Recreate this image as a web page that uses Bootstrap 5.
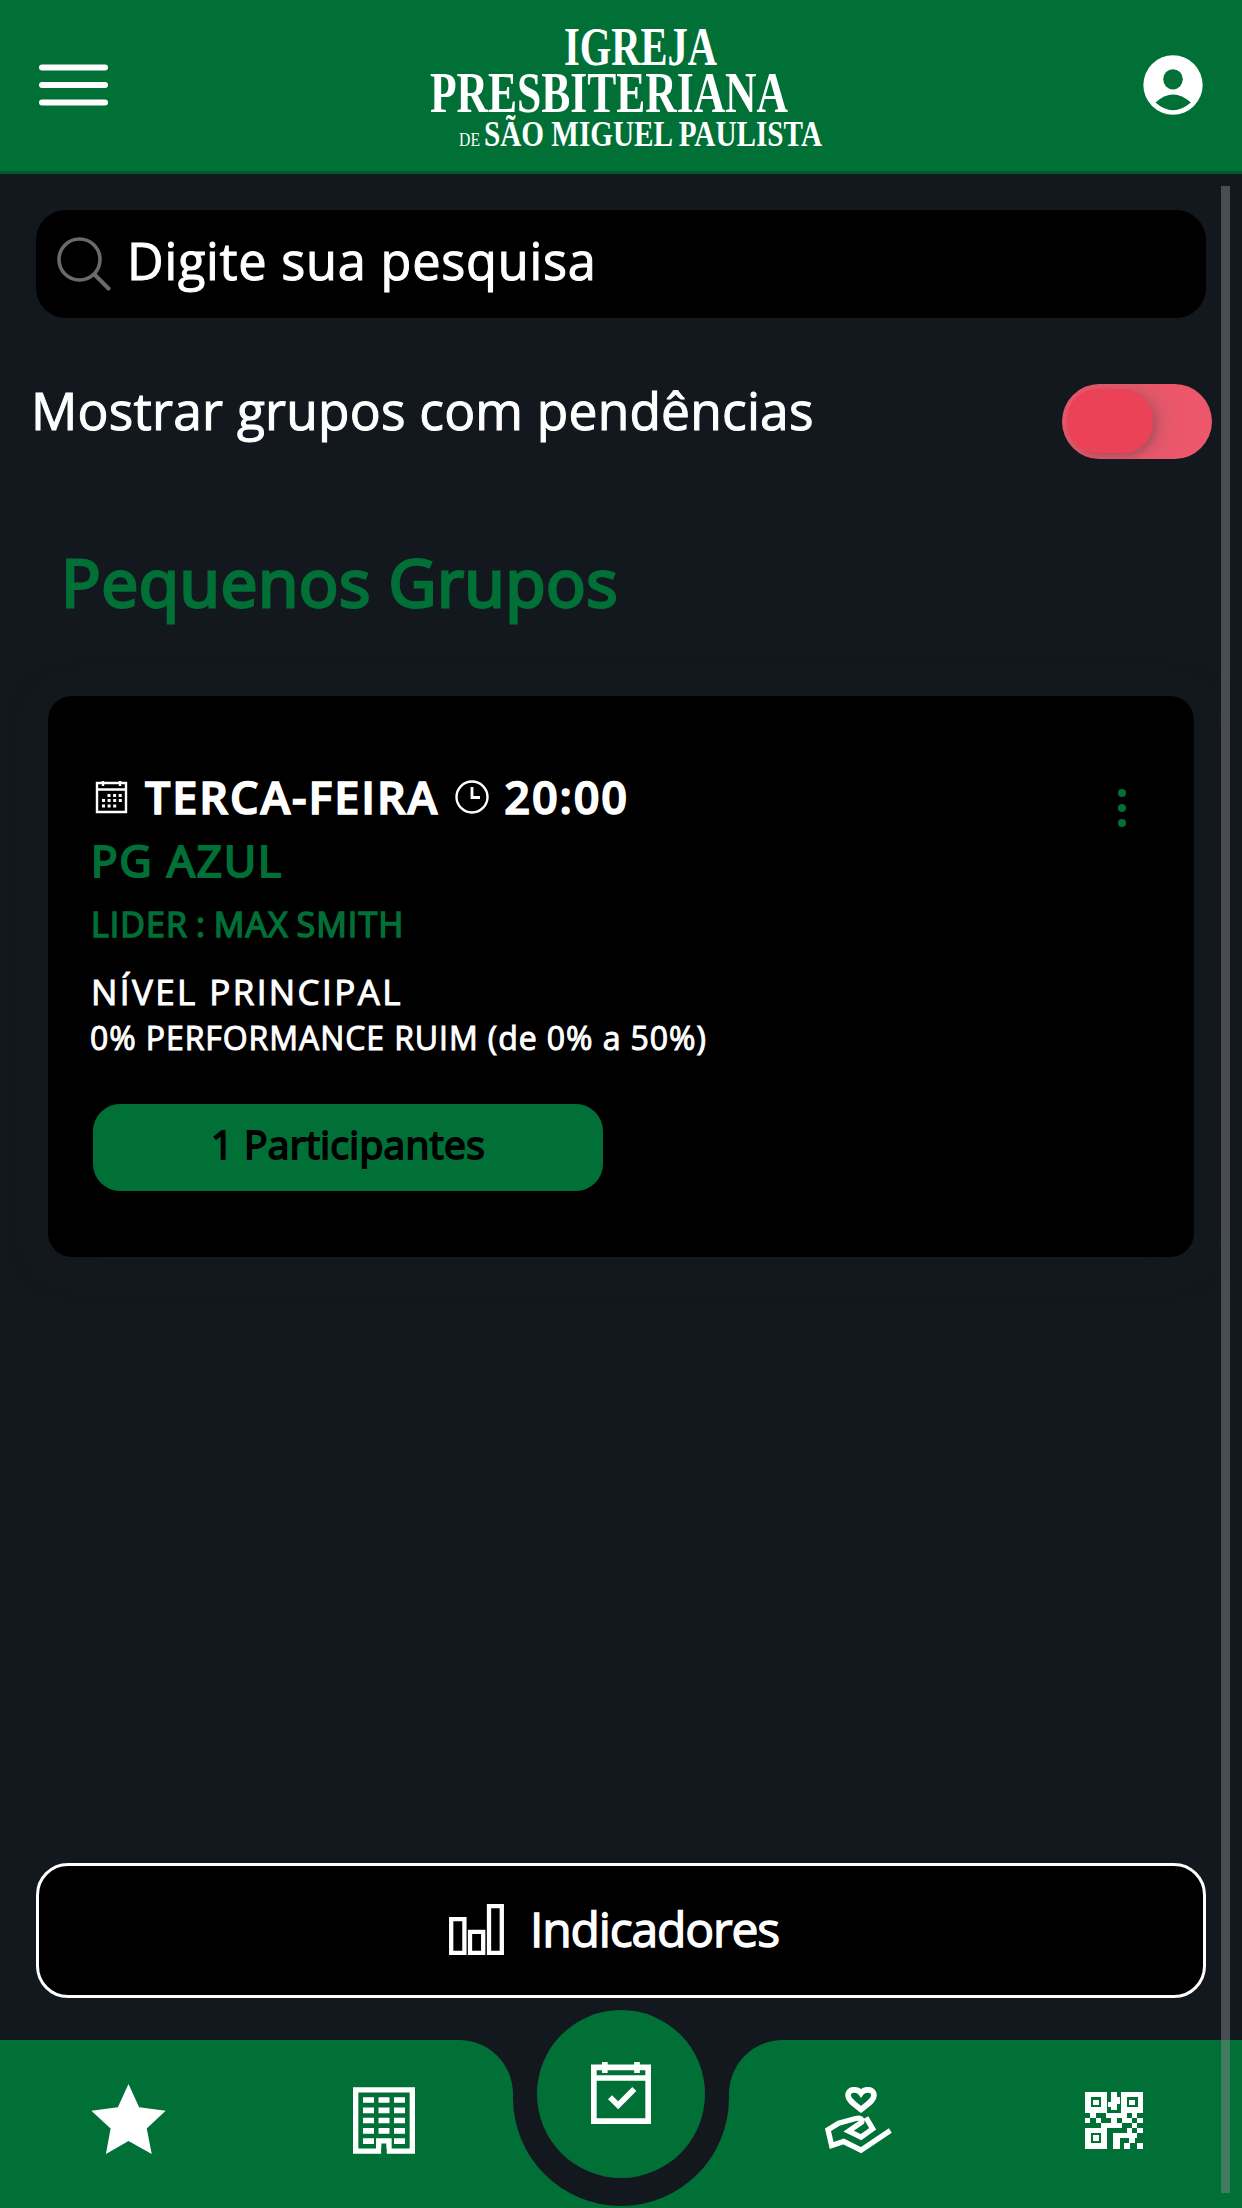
<!DOCTYPE html>
<html lang="pt-BR">
<head>
<meta charset="utf-8">
<meta name="viewport" content="width=device-width, initial-scale=1">
<title>Pequenos Grupos</title>
<link rel="stylesheet" href="https://cdn.jsdelivr.net/npm/bootstrap@5.3.0/dist/css/bootstrap.min.css">
<style>
:root{--brand:#007037;--ink:#13181f}
body{background:var(--ink);color:#fff;font-family:"Open Sans","Noto Sans",sans-serif;-webkit-text-stroke:1px currentColor}
.app{height:2208px;width:1242px;overflow:hidden}
.app svg{display:block;flex:none}
.t{white-space:nowrap}
.topbar{height:174px;background:var(--brand);border-bottom:3px solid #005a2b;padding:0 39px 2px 38px}
.brandlogo text{font-family:"Liberation Serif",serif;font-weight:700;fill:#fff;stroke:none}
.searchbox{height:108px;margin:36px 36px 0;background:#000;border-radius:30px;padding:0 0 0 21px}
.searchbox .t{font-size:50.500px;letter-spacing:.75px;margin-left:16px;padding-bottom:7px}
.pending{margin:66px 30px 0 31px;height:75px}
.pending .t{font-size:51.500px;line-height:52px;letter-spacing:.2px}
.toggle{width:150px;height:75px;border-radius:38px;background:#ed576b;padding:5px 5px;overflow:hidden}
.knob{width:86px;height:64px;border-radius:30px;background:#ec4258;box-shadow:3px 4px 7px rgba(130,70,85,.45),8px 0 26px rgba(150,90,100,.45)}
.heading{font-size:66px;line-height:80px;font-weight:400;letter-spacing:.45px;color:var(--brand);margin:82px 0 0 61px;-webkit-text-stroke-width:2.8px}
.group{margin:75px 48px 0;height:561px;background:#000;border-radius:24px;padding:70px 60px 0 43px;box-shadow:0 4px 36px rgba(22,27,26,.9)}
.when{font-size:45px;line-height:60px;font-weight:600;-webkit-text-stroke-width:1.6px;letter-spacing:1.9px;position:relative;top:1px}
.gname{font-size:44px;line-height:60px;letter-spacing:2px;color:var(--brand);margin-top:4px;-webkit-text-stroke-width:2.2px}
.leader{font-size:34px;line-height:44px;letter-spacing:1.050px;color:var(--brand);margin-top:12px;-webkit-text-stroke-width:1.500px;word-spacing:-2px}
.level{font-size:35px;line-height:46px;letter-spacing:2.400px;margin-top:23px}
.perf{font-size:32px;line-height:44px;letter-spacing:.92px;margin-top:1px;margin-left:-1px}
.people{width:510px;height:87px;margin:44px 0 0 2px;border-radius:27px;background:var(--brand);color:#000;font-size:39px;font-weight:400;letter-spacing:.3px;padding:0 0 7px 0;border:0;-webkit-text-stroke-width:1.800px}
.indic{height:135px;margin:0 36px 42px;background:#000;border:3px solid #fff;border-radius:32px;font-size:48px;letter-spacing:-1.150px;color:#fff;padding:0 14px 3px 0}
.indic .t{margin-left:26px;-webkit-text-stroke-width:1.300px}
.tabbar{height:168px}
.tabbar .side{width:257px}
.tabbar .mid{width:214px}
.bar-shape{position:absolute;inset:0}
.fab{position:absolute;left:537px;top:-30px;width:168px;height:168px;border-radius:50%;background:var(--brand);padding-top:52px}
.scroll-thumb{position:absolute;left:1221px;top:186px;width:9px;height:2007px;background:rgba(140,140,140,.45)}
</style>
<script src="https://cdn.jsdelivr.net/npm/bootstrap@5.3.0/dist/js/bootstrap.bundle.min.js"></script>
</head>
<body>
<div class="app d-flex flex-column position-relative">
  <header class="topbar d-flex align-items-center justify-content-between">
    <svg width="71" height="42" viewBox="0 0 71 42"><path d="M4 3.500H67M4 21H67M4 38.500H67" stroke="#fff" stroke-width="6" stroke-linecap="round"/></svg>
    <svg class="brandlogo" width="410" height="169" viewBox="421 0 410 169">
      <text x="564" y="65" font-size="55" textLength="153" lengthAdjust="spacingAndGlyphs">IGREJA</text>
      <text x="430" y="112" font-size="56" textLength="358" lengthAdjust="spacingAndGlyphs">PRESBITERIANA</text>
      <text x="459" y="146" font-size="19" style="font-weight:400" textLength="21" lengthAdjust="spacingAndGlyphs">DE</text>
      <text x="484" y="146" font-size="36" textLength="338" lengthAdjust="spacingAndGlyphs">SÃO MIGUEL PAULISTA</text>
    </svg>
    <svg width="60" height="60" viewBox="490 171 178 178"><circle cx="579" cy="260" r="88" fill="#fff"/><ellipse cx="579" cy="243" rx="29" ry="30" fill="#007037"/><path d="M527 312Q579 264 632 312Q579 358 527 312Z" fill="#007037"/></svg>
  </header>

  <div class="searchbox d-flex align-items-center">
    <svg width="54" height="54" viewBox="0 0 54 54" fill="none" stroke="#6a6a6a" stroke-linecap="round"><circle cx="22.500" cy="22.500" r="20.500" stroke-width="3.600"/><path d="M38 38L51.500 51.500" stroke-width="4"/></svg>
    <span class="t">Digite sua pesquisa</span>
  </div>

  <div class="pending d-flex justify-content-between align-items-start">
    <span class="t">Mostrar grupos com pendências</span>
    <div class="toggle"><div class="knob"></div></div>
  </div>

  <h1 class="heading t mb-0">Pequenos Grupos</h1>

  <section class="group d-flex justify-content-between align-items-start">
    <div>
      <div class="when t d-flex align-items-center">
        <svg width="39" height="34" viewBox="0 0 39 34" fill="none" stroke="#fff" stroke-width="2.400"><path d="M6 3H35V32H6ZM6 9.500H35M12 1V6M29 1V6" /><path d="M16.500 15.500H31M11 20.500H31M11 26H26" stroke-width="3" stroke-dasharray="3 2.600"/></svg>
        <span style="margin-left:15px">TERCA-FEIRA</span>
        <svg class="ms-3" width="34" height="34" viewBox="0 0 34 34" fill="none" stroke="#fff"><circle cx="17" cy="17" r="15.500" stroke-width="2.400"/><path d="M17 7V17.500H25" stroke-width="2.800"/></svg>
        <span style="margin-left:15px">20:00</span>
      </div>
      <div class="gname t">PG AZUL</div>
      <div class="leader t">LIDER : MAX SMITH</div>
      <div class="level t">NÍVEL PRINCIPAL</div>
      <div class="perf t">0% PERFORMANCE RUIM (de 0% a 50%)</div>
      <button class="people btn d-flex align-items-center justify-content-center">1 Participantes</button>
    </div>
    <svg style="margin-top:22px" width="24" height="40" viewBox="0 0 24 40" fill="#007037"><circle cx="12" cy="5" r="4"/><circle cx="12" cy="20" r="4"/><circle cx="12" cy="35" r="4"/></svg>
  </section>

  <button class="indic btn mt-auto d-flex align-items-center justify-content-center">
    <svg width="55" height="51" viewBox="0 0 55 51" fill="none" stroke="#fff" stroke-width="4.300"><path d="M2.200 15.200H15.400V48.800H2.200ZM21 27.800H34.200V48.800H21ZM40 2.200H52.800V48.800H40Z"/></svg>
    <span class="t">Indicadores</span>
  </button>

  <nav class="tabbar d-flex position-relative">
    <svg class="bar-shape" width="1242" height="168" viewBox="0 0 1242 168"><path d="M0 0H459A54 54 0 0 1 513 54V58A108 108 0 0 0 729 58V54A54 54 0 0 1 783 0H1242V168H0Z" fill="#007037"/></svg>
    <a class="side d-flex justify-content-center position-relative" style="padding-top:44px" href="#">
      <svg width="75" height="70" viewBox="273 373 224 211"><path d="M385 373L417 443L497 454L440 507L455 584L385 545L317 584L331 507L273 454L353 443Z" fill="#fff"/></svg>
    </a>
    <a class="side d-flex justify-content-center position-relative pe-1" style="padding-top:47px" href="#">
      <svg width="62" height="67" viewBox="1062 381 186 200" fill="none" stroke="#fff" stroke-width="16"><path d="M1139 573H1070V389H1240V573H1170V542H1139Z" /><path d="M1147 565h16v20h-16z" fill="#007037" stroke="none"/><path d="M1092 419.500H1218M1092 450.500H1218M1092 481H1218M1092 512H1218" stroke-width="17" stroke-dasharray="33 13.500"/><path d="M1092 543h33M1185 543h33" stroke-width="17"/></svg>
    </a>
    <div class="mid position-relative"></div>
    <a class="side d-flex justify-content-center position-relative ps-1" style="padding-top:47px" href="#">
      <svg width="67" height="67" viewBox="192 380 201 200" fill="none" stroke="#fff" stroke-width="17"><path d="M300 447C276 428 261 418 261 404C261 386 288 382 300 398C312 382 339 386 339 404C339 418 324 428 300 447Z"/><path d="M388 510L300 569L248 543L212 555L201 508L233 488L284 474Q306 470 302 485L263 512L300 530L335 505L315 471" stroke-width="16"/></svg>
    </a>
    <a class="side d-flex justify-content-center position-relative" style="padding-top:52px" href="#">
      <svg width="58" height="57" viewBox="0 0 174 171" fill="#fff" shape-rendering="crispEdges"><path d="M0 0H65V62H0ZM109 0H174V62H109ZM0 109H65V171H0Z"/><path d="M17 16H49V46H17ZM126 16H158V46H126ZM17 124H49V154H17Z" fill="#007037"/><path d="M24 23h18v16H24zM132 23h18v16h-18zM24 130h18v18H24z"/><path d="M79 0h16v16h10v20H95v18H79V46H70V31h9zM16 62h16v15H16zM0 77h16v16H0zM32 77h17v16H32zM63 62h62v15H63zM141 62h16v15h-16zM79 77h16v16H79zM110 77h31v16h-31zM157 77h17v16h-17zM49 93h61v15H49zM141 93h16v16h-16zM125 109h16v15h-16zM157 109h17v15h-17zM85 124h72v15H85zM85 139h19v32H85zM133 139h16v15h-16zM117 154h17v17h-17zM156 154h18v17h-18z"/></svg>
    </a>
    <a class="fab d-flex justify-content-center" href="#">
      <svg width="60" height="62" viewBox="453 246 180 186" fill="none" stroke="#fff" stroke-width="17"><path d="M461.500 262H624.500V423.500H461.500ZM461 294H625M494.500 246V279M591 246V279"/><path d="M510 352L534.500 376L583 327"/></svg>
    </a>
  </nav>
  <div class="scroll-thumb"></div>
</div>
</body>
</html>
